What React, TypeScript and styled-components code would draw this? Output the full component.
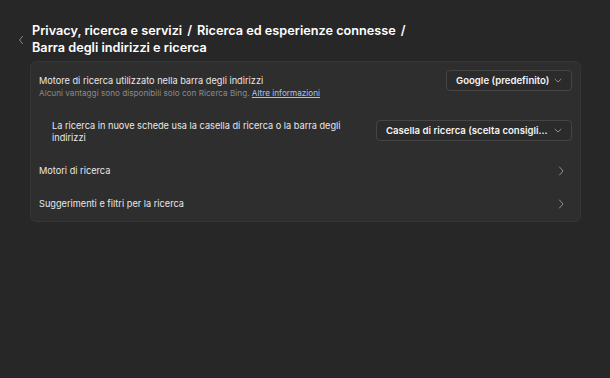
import styled, { createGlobalStyle } from 'styled-components';

const GlobalStyle = createGlobalStyle`
  html, body {
    margin: 0;
    padding: 0;
    background: #272727;
    font-family: Inter, "Liberation Sans", sans-serif;
    color: #f2f2f2;
  }
`;

const Page = styled.div`
  width: 610px;
  height: 378px;
  box-sizing: border-box;
  padding: 23px 29px 0 18px;
`;

const Header = styled.div`
  display: flex;
  align-items: center;
  gap: 8px;
`;

const BackButton = styled.span`
  display: flex;
  width: 6px;
  color: #8a8a8a;
`;

const Title = styled.h1`
  margin: 0;
  font-size: 12.7px;
  font-weight: 600;
  line-height: 16.5px;
  color: #ffffff;

  span {
    margin: 0 5px;
  }
`;

const Card = styled.div`
  margin: 5px 0 0 12px;
  background: #2e2e2e;
  border: 1px solid #363636;
  border-radius: 6px;
  padding: 0 0 1px;
`;

interface RowProps {
  $indent?: boolean;
  $height: number;
  $top?: number;
  $pad?: number;
  $link?: boolean;
}
const Row = styled.div<RowProps>`
  display: flex;
  align-items: ${({ $link }) => ($link ? 'center' : 'flex-start')};
  justify-content: space-between;
  gap: 12px;
  box-sizing: border-box;
  height: ${({ $height }) => $height}px;
  margin-top: ${({ $top }) => $top ?? 0}px;
  padding: ${({ $pad }) => $pad ?? 0}px ${({ $link }) => ($link ? 16 : 8)}px 0
    ${({ $indent }) => ($indent ? 21 : 8)}px;
`;

interface LabelProps {
  $offset?: number;
}
const Label = styled.div<LabelProps>`
  margin-top: ${({ $offset }) => $offset ?? 0}px;
  font-size: 9.2px;
  line-height: 12px;
  color: #e8e8e8;
`;

const LabelWrap = styled(Label)`
  max-width: 300px;
`;

const Sub = styled.div`
  margin-top: 1.5px;
  font-size: 8.2px;
  line-height: 11px;
  color: #8a8a8a;

  a {
    color: #a9c3f2;
    text-decoration: underline;
  }
`;

interface SelectProps {
  $width: number;
}
const Select = styled.div<SelectProps>`
  display: flex;
  align-items: center;
  justify-content: space-between;
  flex-shrink: 0;
  box-sizing: border-box;
  width: ${({ $width }) => $width}px;
  height: 21px;
  padding: 0 9px;
  background: #2b2b2b;
  border: 1px solid #454545;
  border-radius: 4px;
  font-size: 9.6px;
  font-weight: 600;
  color: #f4f4f4;
  white-space: nowrap;
`;

const Chevron = styled.span`
  display: flex;
  color: #8f8f8f;
`;

const ChevronDown = () => (
  <svg width="8" height="5" viewBox="0 0 8 5" fill="none">
    <path d="M1 1.2l3 2.8 3-2.8" stroke="currentColor" strokeWidth="1" strokeLinecap="round" strokeLinejoin="round" />
  </svg>
);

const ChevronRight = () => (
  <svg width="6" height="10" viewBox="0 0 6 10" fill="none">
    <path d="M1.5 1l3.5 4-3.5 4" stroke="currentColor" strokeWidth="1" strokeLinecap="round" strokeLinejoin="round" />
  </svg>
);

const ChevronLeft = () => (
  <svg width="6" height="10" viewBox="0 0 6 10" fill="none">
    <path d="M4.5 1.5L1.5 5l3 3.5" stroke="currentColor" strokeWidth="1" strokeLinecap="round" strokeLinejoin="round" />
  </svg>
);

const links = ['Motori di ricerca', 'Suggerimenti e filtri per la ricerca'];

const App = () => (
  <>
    <GlobalStyle />
    <Page>
      <Header>
        <BackButton>
          <ChevronLeft />
        </BackButton>
        <Title>
          Privacy, ricerca e servizi<span>/</span>Ricerca ed esperienze connesse<span>/</span>
          <br />
          Barra degli indirizzi e ricerca
        </Title>
      </Header>
      <Card>
        <Row $height={38} $pad={8}>
          <div>
            <Label $offset={4.5}>Motore di ricerca utilizzato nella barra degli indirizzi</Label>
            <Sub>
              Alcuni vantaggi sono disponibili solo con Ricerca Bing. <a>Altre informazioni</a>
            </Sub>
          </div>
          <Select $width={126}>
            Google (predefinito)
            <Chevron>
              <ChevronDown />
            </Chevron>
          </Select>
        </Row>
        <Row $indent $height={38} $top={11} $pad={9}>
          <LabelWrap>La ricerca in nuove schede usa la casella di ricerca o la barra degli indirizzi</LabelWrap>
          <Select $width={196}>
            Casella di ricerca (scelta consigli...
            <Chevron>
              <ChevronDown />
            </Chevron>
          </Select>
        </Row>
        {links.map((item, index) => (
          <Row key={item} $link $height={33} $top={index === 0 ? 5 : 0}>
            <Label>{item}</Label>
            <Chevron>
              <ChevronRight />
            </Chevron>
          </Row>
        ))}
      </Card>
    </Page>
  </>
);

export default App;
